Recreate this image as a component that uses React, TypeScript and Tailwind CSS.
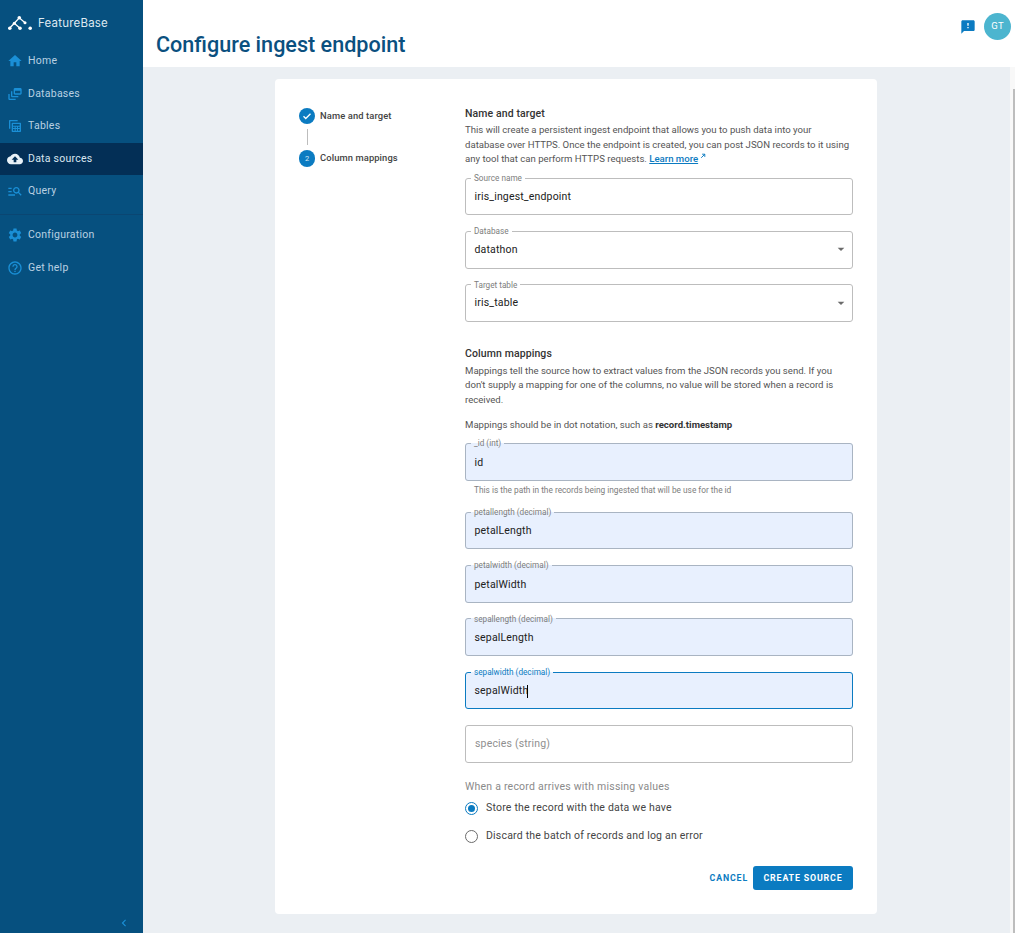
import React from "react";

const P = ({ d, className = "" }: { d: string; className?: string }) => (
  <svg viewBox="0 0 24 24" className={className} fill="currentColor"><path d={d} /></svg>
);

const icons = {
  home: "M10 20v-6h4v6h5v-8h3L12 3 2 12h3v8z",
  db: "M8 8H6v7c0 1.1.9 2 2 2h9v-2H8V8z M20 3h-8c-1.1 0-2 .9-2 2v6c0 1.1.9 2 2 2h8c1.1 0 2-.9 2-2V5c0-1.1-.9-2-2-2zm0 8h-8V7h8v4z M4 12H2v7c0 1.1.9 2 2 2h9v-2H4v-7z",
  table: "M4 3h12v2H5v11H3V4c0-.55.45-1 1-1z M8 7h12c.55 0 1 .45 1 1v12c0 .55-.45 1-1 1H8c-.55 0-1-.45-1-1V8c0-.55.45-1 1-1zm1 2v2.5h10V9H9zm0 4v2h2.5v-2H9zm4 0v2h2v-2h-2zm3.5 0v2H19v-2h-2.5zM9 16.5V19h2.5v-2.5H9zm4 0V19h2v-2.5h-2zm3.5 0V19H19v-2.5h-2.5z",
  cloud: "M19.35 10.04C18.67 6.59 15.64 4 12 4 9.11 4 6.6 5.64 5.35 8.04 2.34 8.36 0 10.91 0 14c0 3.31 2.69 6 6 6h13c2.76 0 5-2.24 5-5 0-2.64-2.05-4.78-4.65-4.96zM14 13v4h-4v-4H7l5-5 5 5h-3z",
  query: "M7 9H2V7h5v2zm0 3H2v2h5v-2zm13.59 7l-3.83-3.83c-.8.52-1.74.83-2.76.83-2.76 0-5-2.24-5-5s2.24-5 5-5 5 2.24 5 5c0 1.02-.31 1.96-.83 2.75L22 17.59 20.59 19zM17 11c0-1.65-1.35-3-3-3s-3 1.35-3 3 1.35 3 3 3 3-1.35 3-3zM2 19h10v-2H2v2z",
  gear: "M19.14 12.94c.04-.3.06-.61.06-.94 0-.32-.02-.64-.07-.94l2.03-1.58c.18-.14.23-.41.12-.61l-1.92-3.32c-.12-.22-.37-.29-.59-.22l-2.39.96c-.5-.38-1.03-.7-1.62-.94l-.36-2.54c-.04-.24-.24-.41-.48-.41h-3.84c-.24 0-.43.17-.47.41l-.36 2.54c-.59.24-1.13.57-1.62.94l-2.39-.96c-.22-.08-.47 0-.59.22L2.74 8.87c-.12.21-.08.47.12.61l2.03 1.58c-.05.3-.09.63-.09.94s.02.64.07.94l-2.03 1.58c-.18.14-.23.41-.12.61l1.92 3.32c.12.22.37.29.59.22l2.39-.96c.5.38 1.03.7 1.62.94l.36 2.54c.05.24.24.41.48.41h3.84c.24 0 .44-.17.47-.41l.36-2.54c.59-.24 1.13-.56 1.62-.94l2.39.96c.22.08.47 0 .59-.22l1.92-3.32c.12-.22.07-.47-.12-.61l-2.01-1.58zM12 15.6c-1.98 0-3.6-1.62-3.6-3.6s1.62-3.6 3.6-3.6 3.6 1.62 3.6 3.6-1.62 3.6-3.6 3.6z",
  help: "M11 18h2v-2h-2v2zm1-16C6.48 2 2 6.48 2 12s4.48 10 10 10 10-4.48 10-10S17.52 2 12 2zm0 18c-4.41 0-8-3.59-8-8s3.59-8 8-8 8 3.59 8 8-3.59 8-8 8zm0-14c-2.21 0-4 1.79-4 4h2c0-1.1.9-2 2-2s2 .9 2 2c0 2-3 1.75-3 5h2c0-2.25 3-2.5 3-5 0-2.21-1.79-4-4-4z",
  feedback: "M20 2H4c-1.1 0-1.99.9-1.99 2L2 22l4-4h14c1.1 0 2-.9 2-2V4c0-1.1-.9-2-2-2zm-7 12h-2v-2h2v2zm0-4h-2V6h2v4z",
};

function NavItem({ icon, label, active, className = "" }: { icon: string; label: string; active?: boolean; className?: string }) {
  return (
    <div className={`flex h-[32.5px] items-center pl-[7px] ${active ? "bg-[#032f56]" : ""} ${className}`}>
      <P d={icon} className={`h-[16px] w-[16px] shrink-0 ${active ? "text-[#e8f1f8]" : "text-[#1a8fd6]"}`} />
      <span className={`ml-[5px] text-[10.5px] tracking-[0.25px] ${active ? "text-[#d9e6f0]" : "text-[#b9d0e2]"}`}>{label}</span>
    </div>
  );
}

function Field({
  label,
  value,
  filled,
  focused,
  select,
  className = "",
}: {
  label: string;
  value: string;
  filled?: boolean;
  focused?: boolean;
  select?: boolean;
  className?: string;
}) {
  return (
    <fieldset
      className={`relative h-[40.3px] rounded-[3px] border px-[5px] ${filled ? "bg-[#e8f0fe]" : "bg-white"} ${
        focused ? "border-[#0b7bc1]" : filled ? "border-[#a9b4c2]" : "border-[#bdbdbd]"
      } ${className}`}
    >
      <legend className={`ml-0 px-[3px] text-[8.2px] leading-[6px] ${focused ? "text-[#0b7bc1]" : "text-[#7d7d7d]"}`}>{label}</legend>
      <div className={`flex h-[35px] items-center pl-[3.5px] text-[10.5px] tracking-[0.17px] text-[#212121] ${filled ? "pb-[3px]" : "pb-[4px]"}`}>
        {value}
        {focused && <span className="ml-[-1px] h-[13px] w-px bg-black" />}
      </div>
      {select && (
        <svg viewBox="0 0 24 24" className="absolute right-[3px] top-[7px] h-[16px] w-[16px] text-[#6b6b6b]" fill="currentColor">
          <path d="M7 10l5 5 5-5z" />
        </svg>
      )}
    </fieldset>
  );
}

function Radio({ label, checked }: { label: string; checked?: boolean }) {
  return (
    <div className="flex h-[28px] items-center">
      <span className={`flex h-[13px] w-[13px] items-center justify-center rounded-full border-[1.5px] ${checked ? "border-[#0b7bc1]" : "border-[#6b6b6b]"}`}>
        {checked && <span className="h-[7px] w-[7px] rounded-full bg-[#0b7bc1]" />}
      </span>
      <span className="ml-[8px] text-[10.5px] tracking-[0.2px] text-[#444]">{label}</span>
    </div>
  );
}

export default function App() {
  return (
    <div className="flex h-[933px] w-[1015px] overflow-hidden bg-white font-['Roboto',sans-serif]">
      <aside className="flex h-full w-[143px] shrink-0 flex-col bg-[#06507f]">
        <div className="flex h-[45px] items-center pl-[8px] pt-[1px]">
          <svg viewBox="0 0 24 14" className="h-[14px] w-[24px]" fill="none">
            <path d="M1.5 12.3L6.3 7.3L11.3 1.8L17 6.7M6.3 7.3L12 12.3" stroke="#fff" strokeWidth="1.3" />
            <circle cx="1.8" cy="12.2" r="1.8" fill="#fff" />
            <circle cx="6.3" cy="7.3" r="1.5" fill="#fff" />
            <circle cx="11.3" cy="1.8" r="1.8" fill="#fff" />
            <circle cx="12" cy="12.2" r="1.8" fill="#fff" />
            <circle cx="17" cy="6.7" r="1.5" fill="#fff" />
            <circle cx="22.2" cy="12.2" r="1.8" fill="#fff" />
          </svg>
          <span className="ml-[6px] mt-[1px] text-[11.5px] tracking-[0.2px] text-[#dfe9f1] font-['Inter',sans-serif]">FeatureBase</span>
        </div>
        <NavItem icon={icons.home} label="Home" />
        <NavItem icon={icons.db} label="Databases" />
        <NavItem icon={icons.table} label="Tables" />
        <NavItem icon={icons.cloud} label="Data sources" active />
        <NavItem icon={icons.query} label="Query" />
        <div className="mt-[6px] mb-[4px] h-px bg-[#0a4672]" />
        <NavItem icon={icons.gear} label="Configuration" />
        <NavItem icon={icons.help} label="Get help" className="mt-[0.5px]" />
        <div className="mt-auto flex justify-end pb-[3px] pr-[12px]">
          <svg viewBox="0 0 24 24" className="h-[14px] w-[14px] text-[#1a8fd6]" fill="currentColor">
            <path d="M15.41 7.41L14 6l-6 6 6 6 1.41-1.41L10.83 12z" />
          </svg>
        </div>
      </aside>

      <main className="flex min-w-0 flex-1 flex-col">
        <header className="flex h-[67px] shrink-0 items-start justify-between pl-[13px] pr-[4px]">
          <h1 className="mt-[32px] text-[21.6px] font-medium leading-[26px] text-[#0b507f]">Configure ingest endpoint</h1>
          <div className="mt-[13px] flex items-center gap-[8px]">
            <P d={icons.feedback} className="h-[16px] w-[16px] text-[#0b7bc1]" />
            <div className="flex h-[27px] w-[27px] items-center justify-center rounded-full bg-[#4cb5cf] text-[9.5px] tracking-[0.3px] text-white">GT</div>
          </div>
        </header>

        <div className="flex min-h-0 flex-1 bg-[#ebeff3]">
          <div className="flex min-w-0 flex-1 pl-[132px] pt-[12px]">
            <section className="flex h-[835px] w-[602px] rounded-[4px] bg-white pl-[24px] pt-[29px]">
              <div className="w-[166px] shrink-0">
                <div className="flex items-center">
                  <span className="flex h-[16px] w-[16px] items-center justify-center rounded-full bg-[#0b7bc1]">
                    <svg viewBox="0 0 24 24" className="h-[12px] w-[12px]" fill="none" stroke="#fff" strokeWidth="2.6">
                      <path d="M5 12.5l4.5 4.5L19 7.5" />
                    </svg>
                  </span>
                  <span className="ml-[5px] text-[9.4px] font-medium tracking-[0.1px] text-[#444]">Name and target</span>
                </div>
                <div className="ml-[8px] my-[5px] h-[16px] w-px bg-[#bdbdbd]" />
                <div className="flex items-center">
                  <span className="flex h-[17px] w-[16px] items-center justify-center rounded-full bg-[#0b7bc1] text-[7.5px] text-[#d7e9f6]">2</span>
                  <span className="ml-[5px] mt-[-1px] text-[9.4px] font-medium tracking-[0.1px] text-[#444]">Column mappings</span>
                </div>
              </div>

              <div className="w-[388px] shrink-0">
                <h2 className="mt-[-1px] text-[10.5px] font-medium leading-[14px] tracking-[0.1px] text-[#333]">Name and target</h2>
                <p className="mt-[2px] text-[9.6px] leading-[14.5px] text-[#555]">
                  This will create a persistent ingest endpoint that allows you to push data into your database over HTTPS. Once the endpoint is created, you can post JSON records to it using any tool that can perform HTTPS requests.{" "}
                  <span className="font-medium text-[#0b7bc1] underline">Learn more</span>
                  <svg viewBox="0 0 10 10" className="ml-[2px] inline h-[6px] w-[6px] align-[3px] text-[#0b7bc1]" fill="none" stroke="currentColor" strokeWidth="1.6"><path d="M2 8L8 2M3.5 2H8v4.5" /></svg>
                </p>

                <Field className="mt-[8.5px]" label="Source name" value="iris_ingest_endpoint" />
                <Field className="mt-[13px]" label="Database" value="datathon" select />
                <Field className="mt-[13px]" label="Target table" value="iris_table" select />

                <h2 className="mt-[25px] text-[10.5px] font-medium leading-[14px] tracking-[0.1px] text-[#333]">Column mappings</h2>
                <p className="mt-[3px] text-[9.6px] leading-[14.5px] text-[#555]">
                  Mappings tell the source how to extract values from the JSON records you send. If you don't supply a mapping for one of the columns, no value will be stored when a record is received.
                </p>
                <p className="mt-[10.5px] text-[9.6px] leading-[14.5px] text-[#555]">
                  Mappings should be in dot notation, such as <b className="font-bold text-[#333]">record.timestamp</b>
                </p>

                <Field className="mt-[8px]" label="_id (int)" value="id" filled />
                <p className="mt-[4.5px] pl-[9px] text-[8.3px] leading-[10px] text-[#7d7d7d]">This is the path in the records being ingested that will be use for the id</p>
                <Field className="mt-[14px]" label="petallength (decimal)" value="petalLength" filled />
                <Field className="mt-[13px]" label="petalwidth (decimal)" value="petalWidth" filled />
                <Field className="mt-[13px]" label="sepallength (decimal)" value="sepalLength" filled />
                <Field className="mt-[13px]" label="sepalwidth (decimal)" value="sepalWidth" filled focused />

                <div className="mt-[16px] flex h-[37.3px] items-center rounded-[3px] border border-[#bdbdbd] bg-white pl-[9px] pb-[1px] text-[10.5px] tracking-[0.17px] text-[#8f8f8f]">species (string)</div>

                <p className="mt-[17.5px] text-[10.5px] leading-[14px] tracking-[0.22px] text-[#8a8a8a]">When a record arrives with missing values</p>
                <Radio label="Store the record with the data we have" checked />
                <Radio label="Discard the batch of records and log an error" />

                <div className="mt-[16px] flex items-center justify-end">
                  <span className="mr-[5px] text-[8.8px] font-bold tracking-[0.85px] text-[#0b7bc1]">CANCEL</span>
                  <button className="h-[24px] w-[100px] rounded-[3px] bg-[#0b7bc1] text-[8.8px] font-bold tracking-[0.85px] text-white">CREATE SOURCE</button>
                </div>
              </div>
            </section>
          </div>
          <div className="flex w-[5px] shrink-0 justify-end bg-[#f8f8f8] pt-[22px]">
            <div className="w-[2px] bg-[#bdbdbd]" />
          </div>
        </div>
      </main>
    </div>
  );
}
